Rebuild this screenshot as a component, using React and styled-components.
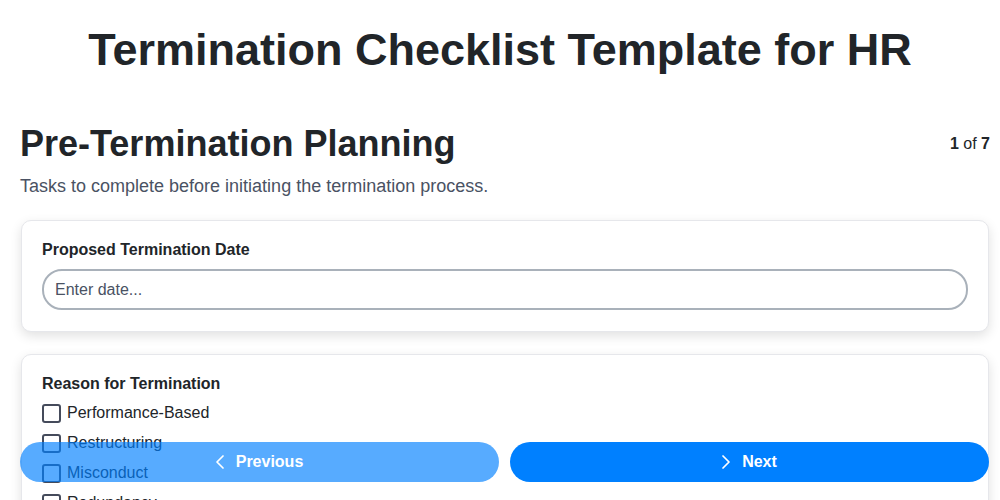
import React, { useState } from 'react';
import styled, { createGlobalStyle } from 'styled-components';
import { ChevronLeft, ChevronRight } from 'lucide-react';

const GlobalStyle = createGlobalStyle`
  html, body {
    margin: 0;
    padding: 0;
    background: #ffffff;
    font-family: "Liberation Sans", Arial, sans-serif;
    color: #212529;
  }
  html::-webkit-scrollbar { display: none; }
  html { scrollbar-width: none; }
  * { box-sizing: border-box; }
`;

const Page = styled.div`
  padding: 24px 10px 100px 20px;
`;

const Title = styled.h1`
  margin: 0 10px 47px 0;
  font-size: 45px;
  font-weight: 700;
  text-align: center;
  color: #212529;
`;

const SectionHeader = styled.div`
  display: flex;
  align-items: center;
  justify-content: space-between;
`;

const SectionTitle = styled.h2`
  margin: 0;
  font-size: 36px;
  font-weight: 700;
  color: #212529;
`;

const Counter = styled.div`
  font-size: 16px;
  color: #212529;

  b {
    font-weight: 700;
  }
`;

const Description = styled.p`
  margin: 11px 0 23px;
  font-size: 18px;
  color: #4a5263;
`;

const Card = styled.div`
  background: #ffffff;
  border: 1px solid #e6e7eb;
  border-radius: 10px;
  box-shadow: 0 4px 12px rgba(0, 0, 0, 0.12);
  padding: 20px 20px 21px;
  margin: 0 1px 22px;
`;

const FieldLabel = styled.div`
  font-size: 16px;
  font-weight: 700;
  color: #212529;
  margin-bottom: ${p => p.$gap}px;
`;

const TextInput = styled.input`
  display: block;
  width: 100%;
  height: 41px;
  border: 2px solid #a9b1ba;
  border-radius: 20px;
  padding: 0 11px;
  font-family: inherit;
  font-size: 16px;
  color: #212529;
  outline: none;

  &::placeholder {
    color: #4a5263;
  }
`;

const OptionList = styled.div`
  display: flex;
  flex-direction: column;
`;

const Option = styled.label`
  display: flex;
  align-items: center;
  gap: 6px;
  height: 30px;
  font-size: 16px;
  color: #212529;
  cursor: pointer;
`;

const Box = styled.span`
  width: 19px;
  height: 19px;
  border: 2px solid #454b5b;
  border-radius: 3px;
  background: ${p => (p.$checked ? '#0080ff' : 'transparent')};
`;

const Footer = styled.div`
  position: fixed;
  left: 20px;
  right: 11px;
  bottom: 18px;
  display: flex;
  gap: 11px;
`;

const NavButton = styled.button`
  flex: 1;
  height: 40px;
  border: none;
  border-radius: 20px;
  background: #0080ff;
  color: #ffffff;
  font-family: inherit;
  font-size: 16px;
  font-weight: 700;
  display: flex;
  align-items: center;
  justify-content: center;
  gap: 4px;
  cursor: pointer;

  svg {
    margin-left: -8px;
  }

  &:disabled {
    opacity: 0.66;
    cursor: default;
  }
`;

const reasons = [
  'Performance-Based',
  'Restructuring',
  'Misconduct',
  'Redundancy',
  'Voluntary Resignation',
  'Other',
];

export default function App() {
  const [checked, setChecked] = useState({});
  const [date, setDate] = useState('');

  const toggle = name => setChecked(c => ({ ...c, [name]: !c[name] }));

  return (
    <Page>
      <GlobalStyle />
      <Title>Termination Checklist Template for HR</Title>

      <SectionHeader>
        <SectionTitle>Pre-Termination Planning</SectionTitle>
        <Counter>
          <b>1</b> of <b>7</b>
        </Counter>
      </SectionHeader>
      <Description>Tasks to complete before initiating the termination process.</Description>

      <Card>
        <FieldLabel $gap={10}>Proposed Termination Date</FieldLabel>
        <TextInput
          value={date}
          onChange={e => setDate(e.target.value)}
          placeholder="Enter date..."
        />
      </Card>

      <Card>
        <FieldLabel $gap={5}>Reason for Termination</FieldLabel>
        <OptionList>
          {reasons.map(r => (
            <Option key={r} onClick={() => toggle(r)}>
              <Box $checked={!!checked[r]} />
              {r}
            </Option>
          ))}
        </OptionList>
      </Card>

      <Footer>
        <NavButton disabled>
          <ChevronLeft size={24} strokeWidth={1.75} />
          Previous
        </NavButton>
        <NavButton>
          <ChevronRight size={24} strokeWidth={1.75} />
          Next
        </NavButton>
      </Footer>
    </Page>
  );
}
